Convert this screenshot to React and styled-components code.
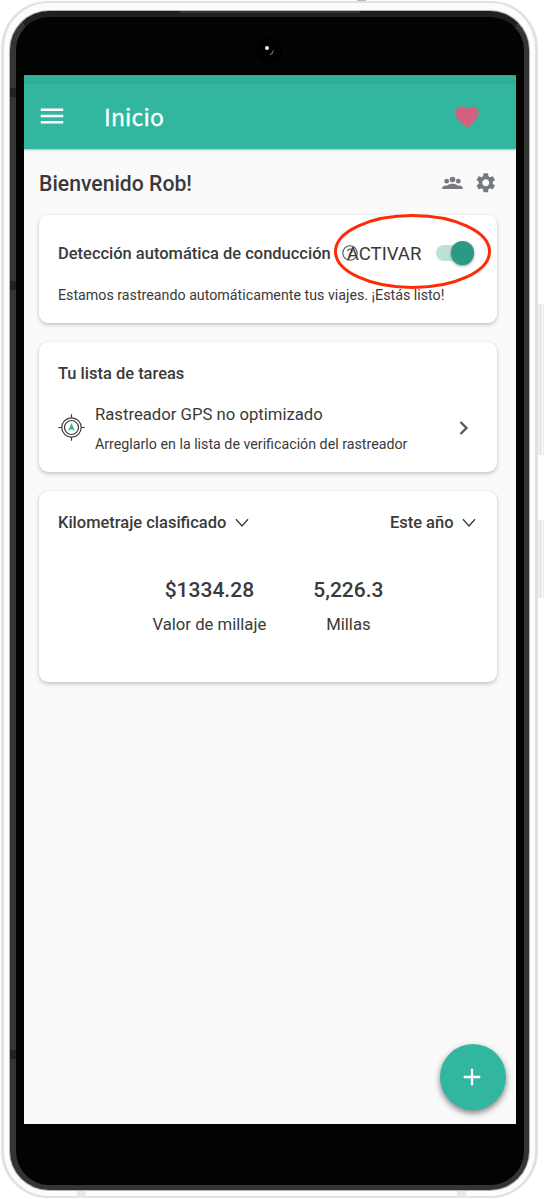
import styled, { createGlobalStyle } from "styled-components";
import { MdMenu, MdFavorite, MdSettings } from "react-icons/md";

const GlobalStyle = createGlobalStyle`
  * { box-sizing: border-box; }
  body {
    margin: 0;
    background: #fff;
    font-family: Roboto, "Liberation Sans", sans-serif;
    color: #3a3a3a;
  }
  svg { display: block; flex: none; }
`
const Stage = styled.div`
  position: relative;
  width: 544px;
  height: 1199px;
  padding: 1px 0 0 1px;
  overflow: hidden;
`
const Shell = styled.div`
  width: 537px;
  height: 1197px;
  padding: 8px 6px 6.5px;
  border: 3px solid #e2e0e0;
  border-top-width: 2px;
  border-bottom-width: 2px;
  border-radius: 47px;
  background: #fcfcfc;
`
const Bezel = styled.div`
  position: relative;
  height: 100%;
  padding: 58px 8px 60px;
  border: solid #343434;
  border-width: 6px 5px 5px 6px;
  border-top-color: #1f2020;
  border-radius: 39px;
  background: #020401;
  box-shadow: 0 0 0 1px #b4b6b5;
`
const Screen = styled.div`
  position: relative;
  display: flex;
  flex-direction: column;
  width: 492px;
  height: 1049px;
  background: #fafafa;
`
const Camera = styled.svg`
  position: absolute;
  left: 240px;
  top: 20px;
`
const SideButton = styled.div`
  position: absolute;
  left: 538px;
  top: ${({top})=>top}px;
  width: 6px;
  height: ${({height})=>height}px;
  border-right: 2px solid #f3f2f2;
  background: linear-gradient(90deg, #f0eeee 2px, #e3e0e1 2px, #e3e0e1 3px, #f6f4f4 3px);
`
const Antenna = styled.div`
  position: absolute;
  left: ${({x})=>x}px;
  top: ${({y})=>y}px;
  width: ${({w})=>w}px;
  height: ${({h})=>h}px;
  background: ${({tone})=>tone || "#202221"};
`
const AppBar = styled.header`
  display: flex;
  align-items: center;
  height: 74px;
  padding: 8px 35px 0 13px;
  border-top: 1px solid #2aa58f;
  background: linear-gradient(#31b39c 0, #2dab95 8px, #33b6a0 8px);
  box-shadow: 0 1px 2px rgba(0, 0, 0, 0.28);
  color: #fff;
`
const MenuIcon = styled(MdMenu)`
  margin-top: -1px;
`
const Title = styled.h1`
  flex: 1;
  margin: -1px 0 0 37px;
  font: 400 23px/34px "Noto Sans CJK SC", "Noto Sans", sans-serif;
  letter-spacing: 0.15px;
  -webkit-text-stroke: 0.3px #fff;
`
const Content = styled.main`
  display: flex;
  flex-direction: column;
  padding: 0 19px 0 15px;
`
const Greeting = styled.div`
  display: flex;
  align-items: center;
  height: 66px;
  padding: 1px 0 0;
  gap: 11px;
  color: #767a80;

  h2 {
    flex: 1;
    margin: 1px 0 0;
    font-size: 21.2px;
    font-weight: 500;
    color: #3a3a3a;
  }
`
const Card = styled.section`
  height: ${({height})=>height}px;
  margin-bottom: 19px;
  padding: 0 19px;
  border-radius: 9px;
  background: #fff;
  box-shadow: 0 2px 4px rgba(0, 0, 0, 0.2), 0 0 2px rgba(0, 0, 0, 0.08);
`
const CardTitle = styled.h3`
  margin: 0;
  padding-top: ${({$top})=>$top || 0}px;
  font-size: 16.48px;
  line-height: 22px;
  font-weight: 500;
`
const DetectionRow = styled.div`
  display: flex;
  align-items: center;
  padding-top: 24px;
  height: 54px;
  margin-bottom: 16px;
`
const HelpIcon = styled.svg`
  margin: -2px 0 0 11px;
`
const SwitchLabel = styled.span`
  margin-left: -11px;
  font-size: 18.6px;
`
const Track = styled.span`
  display: flex;
  align-items: center;
  justify-content: flex-end;
  width: 38px;
  height: 16px;
  margin: -2px 0 0 15px;
  border-radius: 8px;
  background: #bce2d9;
`
const Thumb = styled.span`
  flex: none;
  width: 23.5px;
  height: 23.5px;
  border-radius: 50%;
  background: #2a9a84;
  box-shadow: 0 1px 3px rgba(0, 0, 0, 0.4);
`
const Note = styled.p`
  margin: 0;
  font-size: 14.24px;
  line-height: 20px;
`
const Highlight = styled.svg`
  position: absolute;
  left: 308px;
  top: 136px;
`
const Task = styled.div`
  display: flex;
  align-items: center;
  margin-top: 17px;
  padding-right: 4px;
`
const TaskText = styled.div`
  flex: 1;
  margin: 1px 0 -1px 10px;
`
const TaskName = styled.div`
  margin-bottom: 8px;
  font-size: 16.7px;
  line-height: 23px;
`
const Filters = styled.div`
  display: flex;
  justify-content: space-between;
  padding: 21px 2px 0 0;
`
const Filter = styled.div`
  display: flex;
  align-items: center;
  gap: 8.5px;
`
const Stats = styled.div`
  display: flex;
  justify-content: center;
  gap: 47px;
  margin-top: 41px;
  text-align: center;
`
const Value = styled.div`
  font-size: 21px;
  line-height: 30px;
  font-weight: 500;
`
const Caption = styled.div`
  margin-top: 9px;
  font-size: 16.7px;
  line-height: 22px;
`
const AddButton = styled.button`
  position: absolute;
  left: 416px;
  top: 969px;
  display: grid;
  place-items: center;
  width: 66px;
  height: 66px;
  padding: 0 2px 1px 0;
  border: none;
  border-radius: 50%;
  background: #33b6a0;
  box-shadow: 0 3px 6px rgba(0, 0, 0, 0.5);
`

const PeopleIcon = () => (
  <svg width="21" height="14" viewBox="0 0 21 14" fill="currentColor">
    <circle cx="10.5" cy="3.5" r="2.8" />
    <circle cx="4.7" cy="5.2" r="2.4" />
    <circle cx="16.3" cy="5.2" r="2.4" />
    <path d="M.3 13v-1.2c0-1.4 2.3-2.5 4.8-2.1C6.5 8.3 8.4 7.8 10.5 7.8s4 .5 5.4 1.9c2.5-.4 4.8.7 4.8 2.1V13z" />
  </svg>
)

const GpsIcon = () => (
  <svg width="27" height="27" viewBox="0 0 27 27" fill="none" stroke="#3a3a3a" strokeWidth="1.2">
    <circle cx="13.5" cy="13.5" r="9.7" />
    <circle cx="13.5" cy="13.5" r="7" />
    <path d="M13.5 .3v3.5M13.5 23.2v3.5M.3 13.5h3.5M23.2 13.5h3.5" />
    <path d="M13.5 9l3.3 7.8-3.3-1.6-3.3 1.6z" fill="#33b6a0" stroke="none" />
  </svg>
)

const Caret = () => (
  <svg width="14" height="10" viewBox="0 0 14 10" fill="none" stroke="#3a3a3a" strokeWidth="1.3">
    <path d="M1 1.2l6 6.8 6-6.8" />
  </svg>
)

const stats = [
  { value: "$1334.28", label: "Valor de millaje" },
  { value: "5,226.3", label: "Millas" },
]

const App = () => {
  return (
    <Stage>
      <GlobalStyle />
      <SideButton top={304} height={151} />
      <SideButton top={520} height={78} />
      <Shell>
        <Bezel>
          <Camera width="26" height="26" viewBox="0 0 26 26">
            <circle cx="13" cy="13" r="13" fill="#000" />
            <circle cx="11" cy="11" r="2" fill="#f4f4f8" />
            <path d="M13.5 18c2.5 0 4.5-1.5 4-6-1 2.5-2 4-4 6z" fill="#6a6199" />
          </Camera>
          <Screen>
            <AppBar>
              <MenuIcon size={30} />
              <Title>Inicio</Title>
              <MdFavorite size={28} color="#d4607f" />
            </AppBar>
            <Content>
              <Greeting>
                <h2>Bienvenido Rob!</h2>
                <PeopleIcon />
                <MdSettings size={23.5} />
              </Greeting>
              <Card height={108}>
                <DetectionRow>
                  <CardTitle>Detección automática de conducción</CardTitle>
                  <HelpIcon width="16" height="16" viewBox="0 0 16 16" fill="none" stroke="#555" strokeWidth="1.1">
                    <circle cx="8" cy="8" r="7.2" />
                    <path d="M5.7 6.2c0-3 4.6-3 4.6 0 0 1.7-2.3 1.7-2.3 3.5M8 11v1.4" />
                  </HelpIcon>
                  <SwitchLabel>ACTIVAR</SwitchLabel>
                  <Track><Thumb /></Track>
                </DetectionRow>
                <Note>Estamos rastreando automáticamente tus viajes. ¡Estás listo!</Note>
              </Card>
              <Card height={130}>
                <CardTitle $top={21}>Tu lista de tareas</CardTitle>
                <Task>
                  <GpsIcon />
                  <TaskText>
                    <TaskName>Rastreador GPS no optimizado</TaskName>
                    <Note>Arreglarlo en la lista de verificación del rastreador</Note>
                  </TaskText>
                  <svg width="20" height="20" viewBox="0 0 20 20" fill="none" stroke="#555" strokeWidth="2.3">
                    <path d="M6.5 4l6 6-6 6" />
                  </svg>
                </Task>
              </Card>
              <Card height={191}>
                <Filters>
                  <Filter><CardTitle>Kilometraje clasificado</CardTitle><Caret /></Filter>
                  <Filter><CardTitle>Este año</CardTitle><Caret /></Filter>
                </Filters>
                <Stats>
                  {stats.map(({ value, label }) => (
                    <div key={label}>
                      <Value>{value}</Value>
                      <Caption>{label}</Caption>
                    </div>
                  ))}
                </Stats>
              </Card>
            </Content>
            <Highlight width="162" height="80" viewBox="0 0 162 80">
              <ellipse cx="80.5" cy="40.5" rx="77" ry="36" fill="none" stroke="#fd2b06" strokeWidth="3" />
            </Highlight>
            <AddButton>
              <svg width="18" height="18" viewBox="0 0 18 18" stroke="#fff" strokeWidth="2.3">
                <path d="M9 .7v16.6M.7 9h16.6" />
              </svg>
            </AddButton>
          </Screen>
        </Bezel>
      </Shell>
      <Antenna x={10} y={88} w={6} h={9} />
      <Antenna x={10} y={281} w={6} h={9} />
      <Antenna x={10} y={1050} w={6} h={9} />
      <Antenna x={180} y={11} w={180} h={2} tone="#343535" />
      <Antenna x={357} y={0} w={9} h={1} tone="#bbb" />
      <Antenna x={77} y={1191} w={9} h={7} tone="#ebe7e7" />
      <Antenna x={457} y={1191} w={9} h={7} tone="#ebe7e7" />
    </Stage>
  )
}

export default App
